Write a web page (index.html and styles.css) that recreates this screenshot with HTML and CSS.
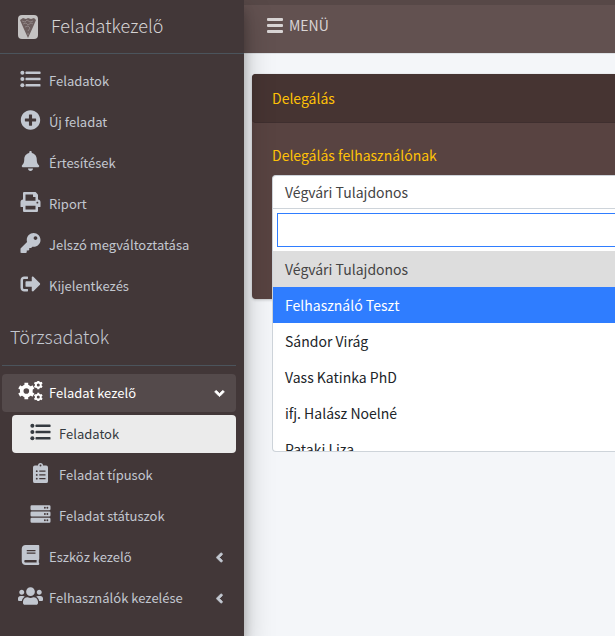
FILE: index.html
```html
<!DOCTYPE html>
<html lang="hu">
<head>
<meta charset="utf-8">
<meta name="viewport" content="width=device-width, initial-scale=1">
<title>Feladatkezelő</title>
<link rel="stylesheet" href="styles.css">
</head>
<body>
<svg class="sprite" aria-hidden="true">
  <symbol id="list" viewBox="0 0 512 512"><circle cx="48" cy="96" r="52"/><circle cx="48" cy="256" r="52"/><circle cx="48" cy="416" r="52"/><rect x="128" y="64" width="384" height="64" rx="16"/><rect x="128" y="224" width="384" height="64" rx="16"/><rect x="128" y="384" width="384" height="64" rx="16"/></symbol>
  <symbol id="plus" viewBox="0 0 512 512"><path d="M256 8C119 8 8 119 8 256s111 248 248 248 248-111 248-248S393 8 256 8zm144 276c0 6.600-5.400 12-12 12h-92v92c0 6.600-5.400 12-12 12h-56c-6.600 0-12-5.400-12-12v-92h-92c-6.600 0-12-5.400-12-12v-56c0-6.600 5.400-12 12-12h92v-92c0-6.600 5.400-12 12-12h56c6.600 0 12 5.400 12 12v92h92c6.600 0 12 5.400 12 12v56z"/></symbol>
  <symbol id="bell" viewBox="0 0 448 512"><path d="M224 512c35.320 0 63.970-28.650 63.970-64H160.030c0 35.350 28.650 64 63.970 64zm215.390-149.710c-19.320-20.760-55.470-51.990-55.470-154.290 0-77.700-54.480-139.900-127.940-155.160V32c0-17.670-14.320-32-31.980-32s-31.980 14.330-31.980 32v20.840C118.560 68.100 64.080 130.300 64.080 208c0 102.300-36.150 133.530-55.470 154.290-6 6.450-8.660 14.160-8.610 21.710.11 16.400 12.980 32 32.100 32h383.800c19.120 0 32-15.600 32.100-32 .05-7.550-2.610-15.270-8.610-21.710z"/></symbol>
  <symbol id="print" viewBox="0 0 512 512"><path d="M448 192V77.250c0-8.490-3.370-16.620-9.370-22.630L393.370 9.370c-6-6-14.140-9.370-22.630-9.370H96C78.330 0 64 14.330 64 32v160c-35.350 0-64 28.650-64 64v112c0 8.840 7.160 16 16 16h48v96c0 17.670 14.330 32 32 32h320c17.670 0 32-14.330 32-32v-96h48c8.840 0 16-7.160 16-16V256c0-35.350-28.650-64-64-64zm-64 256H128v-96h256v96zm0-224H128V64h192v48c0 8.840 7.160 16 16 16h48v96zm48 72c-13.250 0-24-10.750-24-24 0-13.260 10.750-24 24-24s24 10.740 24 24c0 13.250-10.750 24-24 24z"/></symbol>
  <symbol id="key" viewBox="0 0 512 512"><path d="M512 176C512 273.200 433.200 352 336 352c-11.220 0-22.190-1.060-32.830-3.070l-24 27A24 24 0 0 1 261.220 384H224v40c0 13.250-10.750 24-24 24h-40v40c0 13.250-10.750 24-24 24H24c-13.250 0-24-10.750-24-24v-78.060c0-6.360 2.530-12.470 7.030-16.970l161.800-161.800C163.110 213.810 160 195.270 160 176 160 78.800 238.800 0 336 0c97.490 0 176 78.510 176 176zM336 128c0 26.510 21.490 48 48 48s48-21.490 48-48-21.490-48-48-48-48 21.490-48 48z"/></symbol>
  <symbol id="exit" viewBox="0 0 512 512"><path d="M497 273L329 441c-15 15-41 4.500-41-17v-96H152c-13.300 0-24-10.700-24-24v-96c0-13.300 10.700-24 24-24h136V88c0-21.400 25.900-32 41-17l168 168c9.300 9.400 9.300 24.600 0 34zM192 436v-40c0-6.600-5.400-12-12-12H96c-17.700 0-32-14.300-32-32V160c0-17.700 14.300-32 32-32h84c6.600 0 12-5.400 12-12V76c0-6.600-5.400-12-12-12H96c-53 0-96 43-96 96v192c0 53 43 96 96 96h84c6.600 0 12-5.400 12-12z"/></symbol>
  <symbol id="clipboard" viewBox="0 0 384 512"><path fill-rule="evenodd" d="M336 64h-80a64 64 0 0 0-128 0H48a48 48 0 0 0-48 48v352a48 48 0 0 0 48 48h288a48 48 0 0 0 48-48V112a48 48 0 0 0-48-48zM96 424a24 24 0 1 1 0-48 24 24 0 0 1 0 48zm0-96a24 24 0 1 1 0-48 24 24 0 0 1 0 48zm0-96a24 24 0 1 1 0-48 24 24 0 0 1 0 48zm96-192a24 24 0 1 1 0 48 24 24 0 0 1 0-48zM160 384h160v32H160zm0-96h160v32H160zm0-96h160v32H160z"/></symbol>
  <symbol id="server" viewBox="0 0 512 512"><path id="unit" fill-rule="evenodd" d="M480 160H32a32 32 0 0 1-32-32V64a32 32 0 0 1 32-32h448a32 32 0 0 1 32 32v64a32 32 0 0 1-32 32zm-48-88a24 24 0 1 0 0 48 24 24 0 0 0 0-48zm-64 0a24 24 0 1 0 0 48 24 24 0 0 0 0-48z"/><use href="#unit" y="160"/><use href="#unit" y="320"/></symbol>
  <symbol id="book" viewBox="0 0 448 512"><path d="M448 360V24c0-13.300-10.700-24-24-24H96C43 0 0 43 0 96v320c0 53 43 96 96 96h328c13.300 0 24-10.700 24-24v-16c0-7.500-3.500-14.300-8.900-18.700-4.200-15.400-4.200-59.300 0-74.700 5.400-4.300 8.900-11.100 8.900-18.600zM128 134c0-3.300 2.700-6 6-6h212c3.300 0 6 2.700 6 6v20c0 3.300-2.700 6-6 6H134c-3.300 0-6-2.700-6-6v-20zm0 64c0-3.300 2.700-6 6-6h212c3.300 0 6 2.700 6 6v20c0 3.300-2.700 6-6 6H134c-3.300 0-6-2.700-6-6v-20zm253.400 250H96c-17.700 0-32-14.300-32-32 0-17.600 14.400-32 32-32h285.400c-1.900 17.100-1.900 46.900 0 64z"/></symbol>
  <symbol id="users" viewBox="0 0 640 512"><path d="M96 224c35.300 0 64-28.700 64-64s-28.700-64-64-64-64 28.700-64 64 28.700 64 64 64zm448 0c35.300 0 64-28.700 64-64s-28.700-64-64-64-64 28.700-64 64 28.700 64 64 64zm32 32h-64c-17.600 0-33.500 7.100-45.100 18.600 40.300 22.100 68.900 62 75.100 109.400h66c17.700 0 32-14.300 32-32v-32c0-35.300-28.700-64-64-64zm-256 0c61.900 0 112-50.100 112-112S381.900 32 320 32 208 82.100 208 144s50.100 112 112 112zm76.800 32h-8.300c-20.800 10-43.900 16-68.500 16s-47.600-6-68.500-16h-8.300C179.600 288 128 339.600 128 403.200V432c0 26.500 21.500 48 48 48h288c26.500 0 48-21.500 48-48v-28.800c0-63.600-51.600-115.200-115.200-115.200zm-223.700-13.400C161.500 263.100 145.600 256 128 256H64c-35.300 0-64 28.700-64 64v32c0 17.700 14.300 32 32 32h65.900c6.300-47.400 34.900-87.300 75.200-109.400z"/></symbol>
  <symbol id="cogs" viewBox="0 0 640 512">
    <g id="gear" fill="none" stroke="currentColor"><circle cx="213" cy="256" r="118" stroke-width="92"/><path stroke-width="96" d="M213 116V46M213 396v70M334 186l61-35M92 326l-61 35M334 326l61 35M92 186l-61-35"/></g>
    <use href="#gear" transform="translate(404 -38) scale(.54)"/><use href="#gear" transform="translate(404 274) scale(.54)"/>
  </symbol>
  <symbol id="angle" viewBox="0 0 256 512"><path stroke="currentColor" stroke-width="24" d="M31.700 239l136-136c9.400-9.400 24.600-9.400 33.900 0l22.600 22.600c9.400 9.400 9.400 24.600 0 33.900L127.900 256l96.400 96.400c9.400 9.400 9.400 24.600 0 33.900L201.700 409c-9.400 9.400-24.600 9.400-33.900 0l-136-136c-9.500-9.400-9.500-24.600-.1-34z"/></symbol>
  <symbol id="bars" viewBox="0 0 16 16"><rect y="1" width="16" height="3" rx="1"/><rect y="7" width="16" height="3" rx="1"/><rect y="13" width="16" height="3" rx="1"/></symbol>
</svg>
<div class="app">
  <aside class="sidebar">
    <a class="brand" href="#">
      <svg class="logo" viewBox="0 0 20 24" aria-hidden="true"><rect width="20" height="24" rx="4" fill="#c4c2c2"/><path d="M2 5l3-2 3 1 2-1 3 1 3-1 2 2-3 7-5 11L5 12z" fill="#6c5e5e"/><path d="M4 6l3 1 2-2 3 2 3-1M5 9l3-1 2 2 3-2 2 1M7 12l3-1 2 2-2 3M10 18v2" fill="none" stroke="#a39a9a" stroke-width=".6"/></svg>
      <span>Feladatkezelő</span>
    </a>
    <nav class="nav">
      <a class="item" href="#"><svg class="icon"><use href="#list"/></svg><span>Feladatok</span></a>
      <a class="item" href="#"><svg class="icon"><use href="#plus"/></svg><span>Új feladat</span></a>
      <a class="item" href="#"><svg class="icon"><use href="#bell"/></svg><span>Értesítések</span></a>
      <a class="item" href="#"><svg class="icon"><use href="#print"/></svg><span>Riport</span></a>
      <a class="item" href="#"><svg class="icon"><use href="#key"/></svg><span>Jelszó megváltoztatása</span></a>
      <a class="item" href="#"><svg class="icon"><use href="#exit"/></svg><span>Kijelentkezés</span></a>
      <h2 class="section">Törzsadatok</h2>
      <a class="item open" href="#"><svg class="icon"><use href="#cogs"/></svg><span>Feladat kezelő</span><svg class="angle"><use href="#angle"/></svg></a>
      <div class="sub">
        <a class="item current" href="#"><svg class="icon"><use href="#list"/></svg><span>Feladatok</span></a>
        <a class="item" href="#"><svg class="icon"><use href="#clipboard"/></svg><span>Feladat típusok</span></a>
        <a class="item" href="#"><svg class="icon"><use href="#server"/></svg><span>Feladat státuszok</span></a>
      </div>
      <a class="item" href="#"><svg class="icon"><use href="#book"/></svg><span>Eszköz kezelő</span><svg class="angle"><use href="#angle"/></svg></a>
      <a class="item" href="#"><svg class="icon"><use href="#users"/></svg><span>Felhasználók kezelése</span><svg class="angle"><use href="#angle"/></svg></a>
    </nav>
  </aside>
  <div class="page">
    <header class="topbar"><button class="menu" type="button"><svg class="bars"><use href="#bars"/></svg>MENÜ</button></header>
    <main class="content">
      <section class="card">
        <h1 class="card-title">Delegálás</h1>
        <div class="card-body">
          <label class="label" for="search">Delegálás felhasználónak</label>
          <div class="select">
            <button class="value" type="button">Végvári Tulajdonos</button>
            <div class="dropdown">
              <div class="search"><input id="search" type="text"></div>
              <ul class="options" role="listbox">
                <li class="selected" role="option" aria-selected="true">Végvári Tulajdonos</li>
                <li class="hover" role="option">Felhasználó Teszt</li>
                <li role="option">Sándor Virág</li>
                <li role="option">Vass Katinka PhD</li>
                <li role="option">ifj. Halász Noelné</li>
                <li role="option">Pataki Liza</li>
              </ul>
            </div>
          </div>
        </div>
      </section>
    </main>
  </div>
</div>
</body>
</html>
```
FILE: styles.css
```css
* { box-sizing: border-box; }
body {
  margin: 0;
  background: #f4f6f9;
  color: #212529;
  font: 14px/24px "Source Sans Pro", "Noto Sans CJK SC", "Noto Sans", sans-serif;
}
a { color: inherit; text-decoration: none; }
button, input { font: inherit; }
.sprite { position: absolute; width: 0; height: 0; }
svg { fill: currentColor; flex: none; }

.app { display: flex; min-height: 100vh; overflow: hidden; }
.sidebar {
  flex: 0 0 244px;
  z-index: 1;
  background: #423738;
  color: #c2c7d0;
  box-shadow: 0 14px 28px rgba(0, 0, 0, .25), 0 10px 10px rgba(0, 0, 0, .22);
}
.brand {
  display: flex;
  align-items: flex-start;
  gap: 13px;
  height: 54px;
  padding: 13px 18px;
  border-bottom: 1px solid #4b545c;
  color: #d5d3d4;
  font-size: 18px;
  font-weight: 300;
}
.logo { width: 20px; height: 24px; margin-top: 2px; }
.nav { display: flex; flex-direction: column; gap: 3px; padding: 8px 8px 8px 2px; }
.item {
  display: flex;
  align-items: center;
  gap: 6px;
  height: 38px;
  padding: 0 12px 0 16px;
  border-radius: 4px;
  font-size: 13px;
}
.icon { width: 25px; height: 20px; margin-bottom: 4px; }
.item span { flex: 1; }
.angle { width: 9px; height: 15px; }
.open { background: #544a4b; color: #fff; }
.open .angle { transform: rotate(-90deg); }
.sub { display: flex; flex-direction: column; gap: 3px; padding-left: 10px; }
.current { background: #ebebeb; color: #343a40; }
.section {
  margin: 0 0 5px;
  padding: 16px 8px 17px;
  border-bottom: 1px solid #4b545c;
  font-size: 18px;
  font-weight: 300;
  line-height: 24px;
}

.page { flex: 1; min-width: 0; }
.topbar {
  height: 54px;
  padding: 8px 15px;
  border-bottom: 1px solid #dee2e6;
  border-top: 5px solid #574847;
  background: #625150;
}
.menu {
  display: flex;
  align-items: center;
  gap: 6px;
  padding: 0 8px;
  border: 0;
  background: none;
  color: #d8d4d4;
}
.bars { width: 16px; height: 16px; }
.content { padding: 20px 0 0 8px; }
.card {
  height: 225px;
  border-radius: 4px 0 0 4px;
  background: #584341;
  box-shadow: 0 0 1px rgba(0, 0, 0, .13), 0 1px 3px rgba(0, 0, 0, .2);
}
.card-title {
  margin: 0;
  padding: 12px 20px;
  border-bottom: 1px solid #3f2f2f;
  border-radius: 4px 0 0 4px;
  background: #463432;
  color: #ffc107;
  font-size: 14px;
  font-weight: 400;
  line-height: 24px;
}
.card-body { padding: 20px 0 0 20px; }
.label { display: block; margin-bottom: 8px; color: #ffc107; }
.select { position: relative; }
.value {
  display: block;
  width: 100%;
  height: 34px;
  padding: 0 12px;
  border: 1px solid #ced4da;
  border-right: 0;
  border-radius: 4px 0 0 0;
  background: #fff;
  color: #444;
  text-align: left;
}
.dropdown {
  position: absolute;
  top: 100%;
  left: 0;
  right: 0;
  overflow: hidden;
  border: 1px solid #ced4da;
  border-width: 0 0 1px 1px;
  border-radius: 0 0 0 4px;
  background: #fff;
}
.search { padding: 4px 0 4px 4px; }
.search input {
  display: block;
  width: 100%;
  height: 34px;
  border: 1px solid #2f7dff;
  border-right: 0;
  outline: 0;
}
.options { height: 200px; margin: 0; padding: 0; overflow: hidden; list-style: none; }
.options li { height: 36px; padding: 6px 12px; }
.options .selected { background: #ddd; color: #444; }
.options .hover { background: #2f7dff; color: #fff; }
```
